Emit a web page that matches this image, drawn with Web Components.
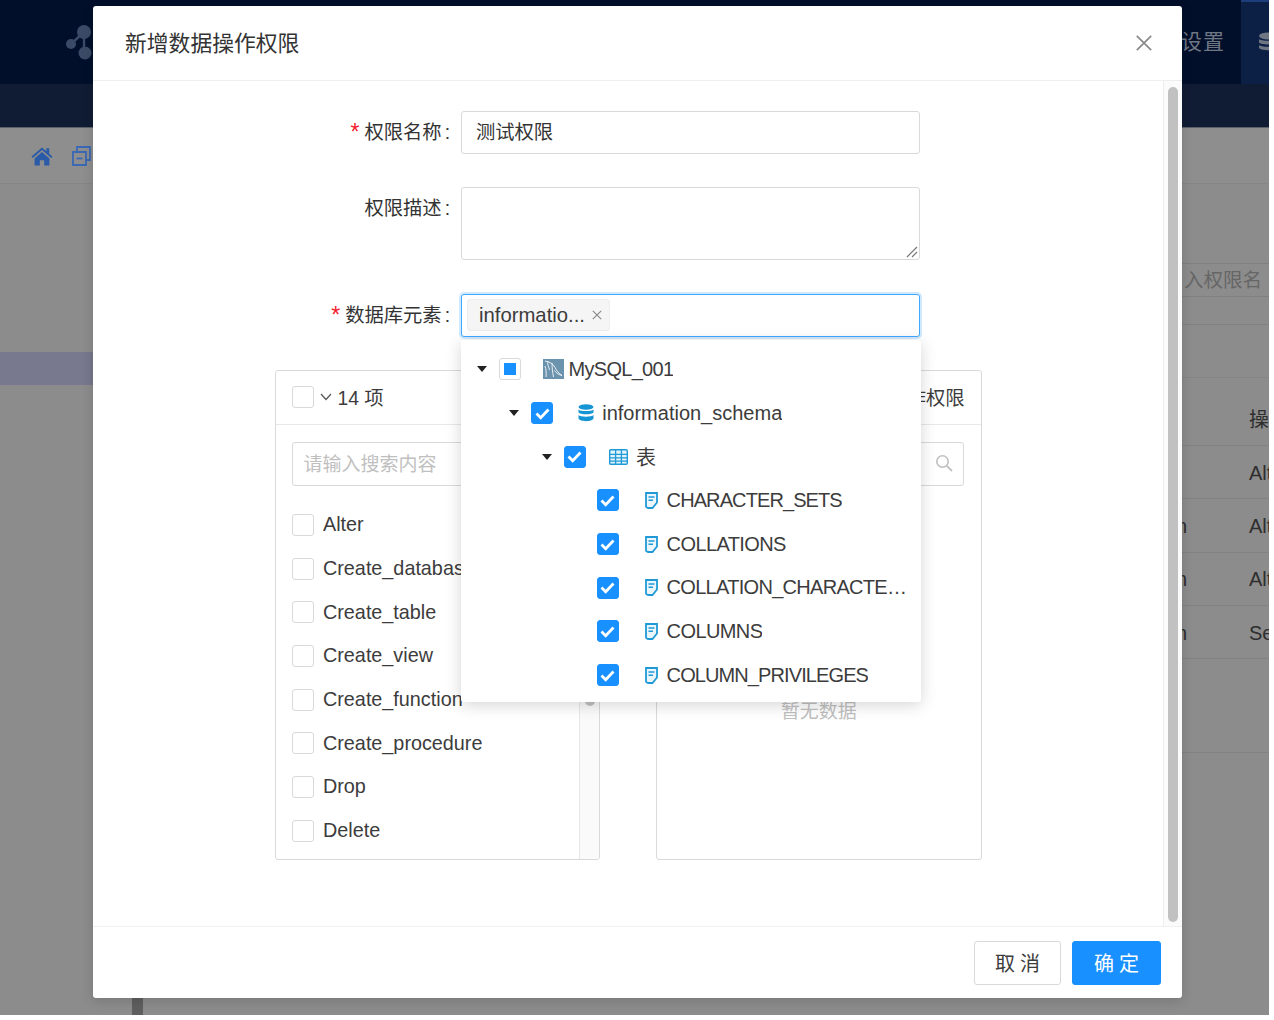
<!DOCTYPE html>
<html><head><meta charset="utf-8"><style>
html,body{margin:0;background:#fff;}
body{font-family:"Liberation Sans","Noto Sans CJK SC",sans-serif;color:#3a3a3a;}
</style></head><body>
<app-stage></app-stage>
<script>
const FONT='"Liberation Sans","Noto Sans CJK SC",sans-serif';
function def(name,css,html){
  customElements.define(name,class extends HTMLElement{
    constructor(){super();const s=this.attachShadow({mode:'open'});
      s.innerHTML='<style>'+css+'</style>'+(typeof html==='function'?html(this):html);}
  });
}
const checkSvg='<svg width="15" height="13" viewBox="0 0 15 13"><path d="M1.500 6.500l4.200 4.200L13.500 2.500" fill="none" stroke="#fff" stroke-width="2.800"/></svg>';
def('check-box',`
:host{display:inline-flex;width:22px;height:22px;box-sizing:border-box;border:1.5px solid #d9d9d9;border-radius:3px;background:#fff;align-items:center;justify-content:center;flex:none}
:host([state=on]){background:#1890ff;border-color:#1890ff}
.dot{display:none;width:12px;height:12px;background:#1890ff}
:host([state=half]) .dot{display:block}
svg{display:none}:host([state=on]) svg{display:block}
`,`<span class="dot"></span>`+checkSvg);

def('back-drop',`
:host{display:flex;flex-direction:column;width:1269px;height:1015px;background:#8c8c8c;overflow:hidden;color:#2e2e2e}
.top{height:84px;flex:none;background:#020f2b;display:flex;align-items:center;padding-left:65px}
.logo{flex:none;margin-bottom:1px}
.sp{flex:1}
.set{color:#6f7684;font-size:21px;letter-spacing:1px;margin-right:16px;padding-bottom:5px}
.dbcell{width:28px;height:84px;box-sizing:border-box;background:#0c1f44;border-top:2px solid #1c3f7c;display:flex;align-items:center;padding-left:17px;overflow:hidden;padding-bottom:3px}
.dbcell svg{flex:none}
.sub{height:44px;flex:none;background:#101c33;border-bottom:1px solid #5c6068;box-sizing:border-box}
.crumb{height:56px;flex:none;background:#8e8e8e;border-bottom:1px solid #858585;box-sizing:border-box;display:flex;align-items:center;gap:19px;padding-left:31px}
.main{flex:1;display:flex;flex-direction:column;position:relative;min-height:0}
.hl{height:33px;background:#78788e;width:200px;margin-top:168px}
.tbl{position:absolute;left:200px;right:0;top:79px}
.q{height:32px;border-top:1px solid #808080;border-bottom:1px solid #808080;color:#666;font-size:19.500px;text-align:right;line-height:32px;padding-right:7px;white-space:nowrap;overflow:hidden;margin-left:982px}
.r{height:53.300px;box-sizing:border-box;border-bottom:1px solid #828282;display:flex;align-items:center;font-size:20px;white-space:nowrap;overflow:hidden;padding-top:2px}
.r b{font-weight:400;flex:none}
.r i{font-style:normal;width:73px;margin-left:976px;flex:none}
.bar{position:absolute;left:132px;bottom:0;width:11px;height:17px;background:#5f5f5f}
.line0{border-bottom:1px solid #828282;height:27px}
.line1{border-bottom:1px solid #858585;height:52px}
.hd{height:68px;padding-top:14px}
`,`
<div class="top">
 <svg class="logo" width="30" height="36" viewBox="0 0 30 36"><g fill="#3b4a66"><circle cx="6" cy="20" r="5"/><circle cx="19" cy="8" r="7"/><circle cx="20" cy="29" r="6.500"/></g><path d="M6 20L19 8M19 8V29" stroke="#3b4a66" stroke-width="2.400" fill="none"/></svg>
 <div class="sp"></div>
 <div class="set">设置</div>
 <div class="dbcell"><svg width="20" height="20" viewBox="0 0 20 20"><g fill="#6f7684"><ellipse cx="10" cy="4" rx="9" ry="3.400"/><path d="M1 7c2 2.400 16 2.400 18 0v3.500c-2 2.600-16 2.600-18 0zM1 13c2 2.400 16 2.400 18 0v3c-2 3-16 3-18 0z"/></g></svg></div>
</div>
<div class="sub"></div>
<div class="crumb">
 <svg width="22" height="20" viewBox="0 0 22 20"><path fill="#2a5aa8" d="M11 1.500L0.500 10.600l1.200 1.300L11 4l9.300 7.900 1.200-1.300-3.300-2.900V2.200h-2.900v3zM3.600 12.600V19.400h5.200v-5.200h4.400v5.200h5.200v-6.800L11 6z"/></svg>
 <svg width="19" height="20" viewBox="0 0 19 20"><path fill="none" stroke="#3a68b4" stroke-width="1.800" d="M1 6h13v13H1zM5 6V1h13v13h-4"/><path d="M4.500 12.500h6" stroke="#3a68b4" stroke-width="1.800"/></svg>
</div>
<div class="main">
 <div class="hl"></div>
 <div class="tbl">
  <div class="q">入权限名</div>
  <div class="line0"></div>
  <div class="line1"></div>
  <div class="r hd"><i></i><b>操</b></div>
  <div class="r"><i></i><b>Alt</b></div>
  <div class="r"><i>n</i><b>Alt</b></div>
  <div class="r"><i>n</i><b>Alt</b></div>
  <div class="r"><i>n</i><b>Se</b></div>
  <div class="r" style="height:94px"></div>
 </div>
 <div class="bar"></div>
</div>`);

def('form-row',`
:host{display:flex;align-items:flex-start}
.l{width:368px;flex:none;box-sizing:border-box;text-align:right;padding-right:11px;font-size:19.300px;color:#333;line-height:44px;white-space:nowrap}
.s{color:#f5222d;margin-right:5px;font-size:23px;line-height:20px;vertical-align:-1px}
.co{margin-left:3px}
.c{width:458.500px;flex:none;position:relative}
`,h=>`<div class="l">${h.hasAttribute('req')?'<span class="s">*</span>':''}${h.getAttribute('label')}<span class="co">:</span></div><div class="c"><slot></slot></div>`);

const treeIcons={
 mysql:'<svg width="21" height="20" viewBox="0 0 21 20"><rect width="21" height="20" fill="#6c93ae"/><path d="M2 2c5 1 8 2.500 10 6.500 1.500 3 3.500 5.500 7 8-3-.8-5.500-2-7.500-5M5 2.500c-1 3 1 5.500 1.500 8.500M9 4c0 5 .5 9 1.500 14M2 7c1 3 1.500 6 1 11" stroke="#fff" stroke-width="1" fill="none" opacity=".85"/></svg>',
 db:'<svg width="16" height="18" viewBox="0 0 16 18"><g fill="#1595d3"><ellipse cx="8" cy="3" rx="7.500" ry="2.800"/><path d="M.5 5.400c1.500 2.200 13.500 2.200 15 0v3.100c-1.500 2.400-13.500 2.400-15 0zM.5 11c1.500 2.200 13.500 2.200 15 0v3.600c-1 3.400-14 3.400-15 0z"/></g></svg>',
 table:'<svg width="19" height="16" viewBox="0 0 19 16"><rect x=".7" y=".7" width="17.600" height="14.600" rx="1.200" fill="#e3f3fb" stroke="#1f9ad6" stroke-width="1.400"/><path d="M.7 5.300H18.300M.7 8.800h17.600M.7 12.200h17.600M6.600 .7v14.600M12.400 .7v14.600" stroke="#1f9ad6" stroke-width="1.300" fill="none"/></svg>',
 file:'<svg width="13" height="17" viewBox="0 0 13 17"><path d="M1 1h11v9.500L7.500 16H3c-1 0-2-.8-2-2z" fill="#eaf6fc" stroke="#1f9ad6" stroke-width="1.800"/><path d="M3.500 5h6M3.500 8.200h4.500" stroke="#1f9ad6" stroke-width="1.600"/></svg>'
};
def('tree-node',`
:host{display:flex;align-items:center;height:43.700px;font-size:20px;color:#3c3c3c;white-space:nowrap}
.ar{width:0;height:0;border-left:5px solid transparent;border-right:5px solid transparent;border-top:6px solid #222;margin-right:12px;flex:none}
.ph{width:10px;margin-right:12px;flex:none}
.ic{display:flex;justify-content:center;width:22px;flex:none}
.t{overflow:hidden;text-overflow:ellipsis;max-width:241px}
`,h=>{const lv=+h.getAttribute('level');const leaf=h.hasAttribute('leaf');
 const tgap=[4,5,6,4][lv];
 const ls=h.getAttribute('ls')||'0';
 return `<div style="width:${16+lv*32.700}px;flex:none"></div>${leaf?'<span class="ph"></span>':'<span class="ar"></span>'}<check-box state="${h.getAttribute('state')}"></check-box><span style="width:22px;flex:none"></span><span class="ic">${treeIcons[h.getAttribute('icon')]}</span><span style="width:${tgap}px;flex:none"></span><span class="t" style="letter-spacing:${ls}px"><slot></slot></span>`});

def('tree-drop',`
:host{position:absolute;left:-1.500px;top:44.500px;width:460px;height:362px;background:#fff;border-radius:3px;box-shadow:0 3px 16px rgba(0,0,0,.17);box-sizing:border-box;padding:8px 0 0;z-index:5;display:block}
`,`<slot></slot>`);

def('db-select',`
:host{display:block;position:relative;height:42.500px;box-sizing:border-box;border:1.5px solid #40a9ff;border-radius:3px;box-shadow:0 0 0 2px rgba(24,144,255,.2);background:#fff}
.tag{position:absolute;left:5px;top:4px;height:32px;width:143px;background:#f5f5f5;border:1px solid #eee;border-radius:3px;box-sizing:border-box;display:flex;align-items:center;padding-left:11px;font-size:20.300px;color:#3c3c3c;white-space:nowrap}
.x{margin-left:7px;display:flex}
`,`<div class="tag">informatio...<span class="x"><svg width="10" height="10" viewBox="0 0 10 10"><path d="M.8.800l8.400 8.400M9.200.800L.8 9.200" stroke="#8a8a8a" stroke-width="1.200"/></svg></span></div><slot></slot>`);

def('text-box',`
:host{display:block;box-sizing:border-box;border:1.5px solid #d9d9d9;border-radius:3px;background:#fff;height:43px;line-height:42px;padding-left:14px;font-size:19.300px;color:#333;position:relative}
:host([area]){height:73px}
svg{position:absolute;right:1px;bottom:1px}
`,h=>`<slot></slot>`+(h.hasAttribute('area')?'<svg width="12" height="12" viewBox="0 0 12 12"><path d="M11 1L1 11M11 6L6 11" stroke="#777" stroke-width="1.200"/></svg>':''));

def('list-row',`
:host{display:flex;align-items:center;height:43.700px;gap:9.500px;font-size:19.800px;color:#3c3c3c;white-space:nowrap}
`,`<check-box></check-box><slot></slot>`);

def('transfer-panel',`
:host{display:flex;flex-direction:column;width:325.500px;height:490px;box-sizing:border-box;border:1.5px solid #d9d9d9;border-radius:3px;background:#fff;flex:none;overflow:hidden}
.h{height:54px;flex:none;border-bottom:1px solid #e8e8e8;display:flex;align-items:center;padding:0 16.500px 2px 16px;font-size:19.300px;box-sizing:border-box;color:#3c3c3c;justify-content:space-between;white-space:nowrap}
.l{display:flex;align-items:center}
.ch{margin:0 6px 0 6px;display:flex}
.b{flex:1;min-height:0;display:flex;flex-direction:column}
.s{margin:17px 17px 0 16px;height:44px;flex:none;border:1.5px solid #d9d9d9;border-radius:3px;box-sizing:border-box;display:flex;align-items:center;justify-content:space-between;padding:0 10px 0 11px;font-size:19px;color:#bfbfbf;white-space:nowrap}
.s span{margin-bottom:4px}
.s svg{margin-bottom:2px}
.list{flex:1;min-height:0;display:flex;position:relative;margin-top:17px}
.items{flex:1;padding:0 0 0 16px;overflow:hidden}
.track{width:20px;flex:none;border-left:1px solid #e8e8e8;background:#fafafa;box-sizing:border-box;padding:0 5px}
.th{width:10px;height:203px;background:#c1c1c1;border-radius:5px}
.e{flex:1;text-align:center;color:#bfbfbf;font-size:19px;padding-top:212px;line-height:28px}
`,h=>{const items=h.hasAttribute('left');
 return `<div class="h"><span class="l"><check-box></check-box><span class="ch"><svg width="12" height="8" viewBox="0 0 12 8"><path d="M1 1l5 5.500L11 1" fill="none" stroke="#555" stroke-width="1.200"/></svg></span>${h.getAttribute('count')}</span><span>${h.getAttribute('title')}</span></div>
 <div class="b"><div class="s"><span>请输入搜索内容</span><svg width="18" height="18" viewBox="0 0 18 18"><circle cx="7.500" cy="7.500" r="5.700" fill="none" stroke="#bfbfbf" stroke-width="1.600"/><path d="M11.800 11.800L17 17" stroke="#bfbfbf" stroke-width="1.800"/></svg></div>
 ${items?'<div class="list"><div class="items"><slot></slot></div><div class="track"><div class="th"></div></div></div>':'<div class="e"><slot></slot></div>'}</div>`});

def('btn-x',`
:host{display:inline-flex;align-items:center;justify-content:center;width:87px;height:44px;box-sizing:border-box;border:1.5px solid #d9d9d9;border-radius:3px;font-size:20px;color:#3c3c3c;background:#fff;letter-spacing:5px;padding-left:5px}
:host([primary]){background:#1890ff;border-color:#1890ff;color:#fff;width:89px}
`,`<slot></slot>`);

def('perm-modal',`
:host{position:absolute;left:93px;top:6px;width:1089px;height:992px;background:#fff;border-radius:3px;display:flex;flex-direction:column;box-shadow:0 3px 12px rgba(0,0,0,.15);font-family:${FONT};overflow:hidden}
.h{height:75px;flex:none;box-sizing:border-box;border-bottom:1.5px solid #eeeeee;display:flex;align-items:center;justify-content:space-between;padding:0 30px 4px 32px;font-size:21.800px;color:#333;white-space:nowrap}
.m{flex:1;min-height:0;display:flex}
.form{flex:1;min-width:0;padding-top:30px;position:relative;display:flex;flex-direction:column}
.sb{width:19px;flex:none;background:#fbfbfb;border-left:1px solid #eee;box-sizing:border-box;padding:6px 4px 4px}
.th{height:100%;background:#c1c1c1;border-radius:5px;width:10px}
.f{height:72px;flex:none;box-sizing:border-box;border-top:1.500px solid #f0f0f0;display:flex;justify-content:flex-end;align-items:center;gap:11px;padding:0 21px 0 0}
.tr{display:flex;gap:55.500px;margin-left:181.500px}
`,`
<div class="h"><span>新增数据操作权限</span><svg width="16" height="16" viewBox="0 0 16 16" style="margin-top:4px"><path d="M.8.800l14.400 14.400M15.200.800L.8 15.200" stroke="#8a8a8a" stroke-width="1.700"/></svg></div>
<div class="m">
 <div class="form">
  <form-row req label="权限名称" style="margin-bottom:32px"><text-box>测试权限</text-box></form-row>
  <form-row label="权限描述" style="margin-bottom:34px"><text-box area></text-box></form-row>
  <form-row req label="数据库元素" style="height:76px;position:relative;z-index:5"><db-select>
    <tree-drop>
     <tree-node level="0" state="half" icon="mysql" ls="-.7">MySQL_001</tree-node>
     <tree-node level="1" state="on" icon="db">information_schema</tree-node>
     <tree-node level="2" state="on" icon="table">表</tree-node>
     <tree-node level="3" leaf state="on" icon="file" ls="-.9">CHARACTER_SETS</tree-node>
     <tree-node level="3" leaf state="on" icon="file" ls="-.6">COLLATIONS</tree-node>
     <tree-node level="3" leaf state="on" icon="file" ls="-.7">COLLATION_CHARACTER_SET_APPLICABILITY</tree-node>
     <tree-node level="3" leaf state="on" icon="file" ls="-.6">COLUMNS</tree-node>
     <tree-node level="3" leaf state="on" icon="file" ls="-.9">COLUMN_PRIVILEGES</tree-node>
    </tree-drop>
  </db-select></form-row>
  <div class="tr">
   <transfer-panel left count="14 项" title="可选操作权限">
    <list-row>Alter</list-row><list-row>Create_database</list-row><list-row>Create_table</list-row><list-row>Create_view</list-row><list-row>Create_function</list-row><list-row>Create_procedure</list-row><list-row>Drop</list-row><list-row>Delete</list-row>
   </transfer-panel>
   <transfer-panel style="width:326.500px" count="0 项" title="已选操作权限">暂无数据</transfer-panel>
  </div>
 </div>
 <div class="sb"><div class="th"></div></div>
</div>
<div class="f"><btn-x>取消</btn-x><btn-x primary>确定</btn-x></div>`);

def('app-stage',`
:host{display:block;position:relative;width:1269px;height:1015px;overflow:hidden;font-family:${FONT}}
`,`<back-drop></back-drop><perm-modal></perm-modal>`);
</script>
</body></html>
